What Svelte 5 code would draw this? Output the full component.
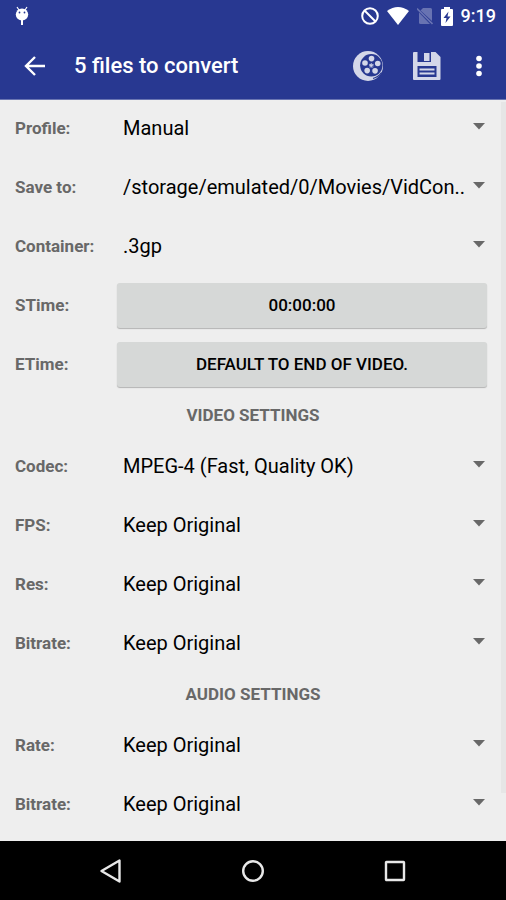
<script lang="ts">
  type Field = {
    id: string;
    label: string;
    value: string;
    kind: 'select' | 'button';
  };

  const general: Field[] = [
    { id: 'profile', label: 'Profile:', value: 'Manual', kind: 'select' },
    {
      id: 'save-to',
      label: 'Save to:',
      value: '/storage/emulated/0/Movies/VidCon..',
      kind: 'select',
    },
    { id: 'container', label: 'Container:', value: '.3gp', kind: 'select' },
    { id: 'stime', label: 'STime:', value: '00:00:00', kind: 'button' },
    { id: 'etime', label: 'ETime:', value: 'DEFAULT TO END OF VIDEO.', kind: 'button' },
  ];

  const video: Field[] = [
    { id: 'codec', label: 'Codec:', value: 'MPEG-4 (Fast, Quality OK)', kind: 'select' },
    { id: 'fps', label: 'FPS:', value: 'Keep Original', kind: 'select' },
    { id: 'res', label: 'Res:', value: 'Keep Original', kind: 'select' },
    { id: 'video-bitrate', label: 'Bitrate:', value: 'Keep Original', kind: 'select' },
  ];

  const audio: Field[] = [
    { id: 'rate', label: 'Rate:', value: 'Keep Original', kind: 'select' },
    { id: 'audio-bitrate', label: 'Bitrate:', value: 'Keep Original', kind: 'select' },
  ];

  const sections = [
    { title: '', fields: general },
    { title: 'VIDEO SETTINGS', fields: video },
    { title: 'AUDIO SETTINGS', fields: audio },
  ];

  // holes of the film reel, evenly spread round the hub
  const holes = [0, 1, 2, 3, 4].map((i) => {
    const angle = ((i * 72 - 88) * Math.PI) / 180;
    return { x: 18.3 + 6.7 * Math.cos(angle), y: 14.3 + 6.7 * Math.sin(angle) };
  });
</script>

<div class="screen">
  <div class="status">
    <svg class="droid" width="14" height="20" viewBox="0 0 14 20" aria-hidden="true">
      <path d="M2 1l2 3M12 1l-2 3" stroke="#fff" stroke-width="1.2" />
      <ellipse cx="7" cy="8.5" rx="6.2" ry="6" fill="#fff" />
      <path d="M7 14v5" stroke="#fff" stroke-width="2" />
      <circle cx="4.5" cy="6.5" r="0.9" fill="#283891" />
      <circle cx="9.5" cy="6.5" r="0.9" fill="#283891" />
    </svg>
    <div class="indicators">
      <svg width="18" height="18" viewBox="0 0 18 18" aria-hidden="true">
        <circle cx="9" cy="9" r="7.8" fill="none" stroke="#fff" stroke-width="2" />
        <path d="M3.5 3.5l11 11" stroke="#fff" stroke-width="2" />
      </svg>
      <svg width="22" height="18" viewBox="0 0 22 18" aria-hidden="true">
        <path d="M0 4Q11-4 22 4L11 18z" fill="#fff" />
      </svg>
      <svg width="16" height="18" viewBox="0 0 16 18" aria-hidden="true">
        <path d="M6 1h7.5q1.500 0 1.500 1.500V14L3.500 3.500z" fill="#6873b2" />
        <path d="M2 5.500l11 11.500H3.500Q2 17 2 15.500z" fill="#6873b2" />
        <path d="M0 1.500l15.500 15.500" stroke="#6873b2" stroke-width="1.6" />
      </svg>
      <svg width="12" height="19" viewBox="0 0 12 19" aria-hidden="true">
        <path d="M3 0h6v2h2q1 0 1 1v15q0 1-1 1H1q-1 0-1-1V3q0-1 1-1h2z" fill="#fff" />
        <path d="M7.500 4.500L2.500 11H5.500L4.500 16L9.500 9.500H6.500z" fill="#283891" />
      </svg>
      <span class="time">9:19</span>
    </div>
  </div>

  <header>
    <button class="icon" aria-label="Back">
      <svg width="22" height="20" viewBox="0 0 22 20">
        <path d="M21 10H3M11 1L2 10l9 9" fill="none" stroke="#fff" stroke-width="2.4" />
      </svg>
    </button>
    <h1>5 files to convert</h1>
    <button class="icon" aria-label="Convert">
      <svg width="30" height="30" viewBox="0 0 30 30">
        <circle cx="15" cy="15" r="15" fill="#d4d7e9" />
        <circle cx="18.3" cy="14.3" r="11.2" fill="#283891" />
        {#each holes as hole}
          <circle cx={hole.x} cy={hole.y} r="2.8" fill="#d4d7e9" />
        {/each}
        <path
          d="M18.300 12v4.600M16 13.600l4.600 1.400M20.600 13.600l-4.600 1.400M17 16.500l2.600-3.600M19.600 16.500l-2.600-3.600"
          stroke="#d4d7e9"
          stroke-width="0.8"
        />
        <path d="M20 27.500Q25.500 26 28.500 21.500" fill="none" stroke="#283891" stroke-width="1.2" />
      </svg>
    </button>
    <button class="icon save" aria-label="Save">
      <svg width="28" height="28" viewBox="0 0 28 28">
        <path d="M1 0H22.500L27.500 5V27q0 1-1 1H1q-1 0-1-1V1q0-1 1-1z" fill="#d4d7e9" />
        <path d="M4.500 0H18V10H4.500z" fill="#283891" />
        <path d="M11 1H16.500V9H11z" fill="#d4d7e9" />
        <path d="M4.500 14H23.500V25H4.500z" fill="#283891" />
        <path d="M6.500 17.500H21.500M6.500 21.500H21.500" stroke="#d4d7e9" stroke-width="1.8" />
      </svg>
    </button>
    <button class="icon" aria-label="More options">
      <svg width="6" height="22" viewBox="0 0 6 22">
        <circle cx="3" cy="3.5" r="2.8" fill="#fff" />
        <circle cx="3" cy="11" r="2.8" fill="#fff" />
        <circle cx="3" cy="18.5" r="2.8" fill="#fff" />
      </svg>
    </button>
  </header>

  <main>
    {#each sections as section}
      {#if section.title}
        <h2>{section.title}</h2>
      {/if}
      {#each section.fields as field (field.id)}
        <div class="row">
          <label for={field.id}>{field.label}</label>
          {#if field.kind === 'select'}
            <div class="spinner">
              <select id={field.id}>
                <option>{field.value}</option>
              </select>
              <svg width="12" height="7" viewBox="0 0 12 7" aria-hidden="true">
                <path d="M0 0h12L6 6.500z" fill="#686868" />
              </svg>
            </div>
          {:else}
            <button class="pick" id={field.id}>{field.value}</button>
          {/if}
        </div>
      {/each}
    {/each}
    <div class="scrollbar"></div>
  </main>

  <nav>
    <button class="icon" aria-label="Navigate back">
      <svg width="24" height="24" viewBox="0 0 24 24">
        <path d="M20.500 1.500v21L2.500 12z" />
      </svg>
    </button>
    <button class="icon" aria-label="Home">
      <svg width="24" height="24" viewBox="0 0 24 24">
        <circle cx="12" cy="12" r="9.8" />
      </svg>
    </button>
    <button class="icon" aria-label="Recent apps">
      <svg width="24" height="24" viewBox="0 0 24 24">
        <rect x="3" y="3" width="18" height="18" rx="0.5" />
      </svg>
    </button>
  </nav>
</div>

<style>
  :global(body) {
    background: #eee;
    font-family: Roboto, 'Liberation Sans', sans-serif;
  }

  * {
    box-sizing: border-box;
  }

  svg {
    display: block;
    flex: none;
  }

  button,
  select {
    font-family: inherit;
    margin: 0;
    border: 0;
  }

  .screen {
    display: flex;
    flex-direction: column;
    min-height: 100vh;
  }

  .status {
    display: flex;
    justify-content: space-between;
    align-items: center;
    height: 32px;
    padding: 0 10px 0 15px;
    background: #283891;
  }

  .indicators {
    display: flex;
    align-items: center;
    gap: 8px;
  }

  .time {
    font-size: 18px;
    font-weight: 500;
    line-height: 20px;
    color: #fff;
  }

  header {
    display: flex;
    align-items: center;
    height: 68px;
    padding: 0 24px;
    background: #283891;
    border-bottom: 1px solid #6a75b2;
  }

  h1 {
    flex: 1;
    margin: 0 0 0 28px;
    font-size: 22px;
    font-weight: 500;
    color: #fff;
  }

  .icon {
    display: flex;
    padding: 0;
    background: none;
    cursor: pointer;
  }

  .save {
    margin: 0 35px 0 30px;
  }

  main {
    position: relative;
    flex: 1;
    padding-bottom: 6px;
    background: #eee;
  }

  .row {
    display: flex;
    align-items: center;
    height: 59px;
    padding: 0 19px 3px 15px;
  }

  label {
    flex: none;
    width: 102px;
    font-size: 17px;
    font-weight: 700;
    color: #686868;
  }

  h2 {
    margin: 0;
    padding-bottom: 2px;
    font-size: 17px;
    font-weight: 700;
    line-height: 41px;
    text-align: center;
    color: #686868;
  }

  .spinner {
    position: relative;
    flex: 1;
    min-width: 0;
  }

  select {
    display: block;
    width: 100%;
    height: 48px;
    padding: 0 20px 0 6px;
    appearance: none;
    background: none;
    font-size: 20px;
    color: #000;
  }

  .spinner svg {
    position: absolute;
    top: 19px;
    right: 2px;
    pointer-events: none;
  }

  .pick {
    flex: 1;
    height: 45px;
    border-radius: 3px;
    background: #d6d8d7;
    box-shadow: 0 1px 1px rgba(0, 0, 0, 0.25);
    font-size: 17px;
    font-weight: 500;
    color: #000;
  }

  .scrollbar {
    position: absolute;
    top: 2px;
    right: 0;
    bottom: 48px;
    width: 5px;
    background: #e6e6e6;
  }

  nav {
    display: flex;
    justify-content: center;
    align-items: center;
    gap: 118px;
    height: 59px;
    background: #000;
  }

  nav svg {
    fill: none;
    stroke: #e8e8e8;
    stroke-width: 2.4;
    stroke-linejoin: round;
  }
</style>
